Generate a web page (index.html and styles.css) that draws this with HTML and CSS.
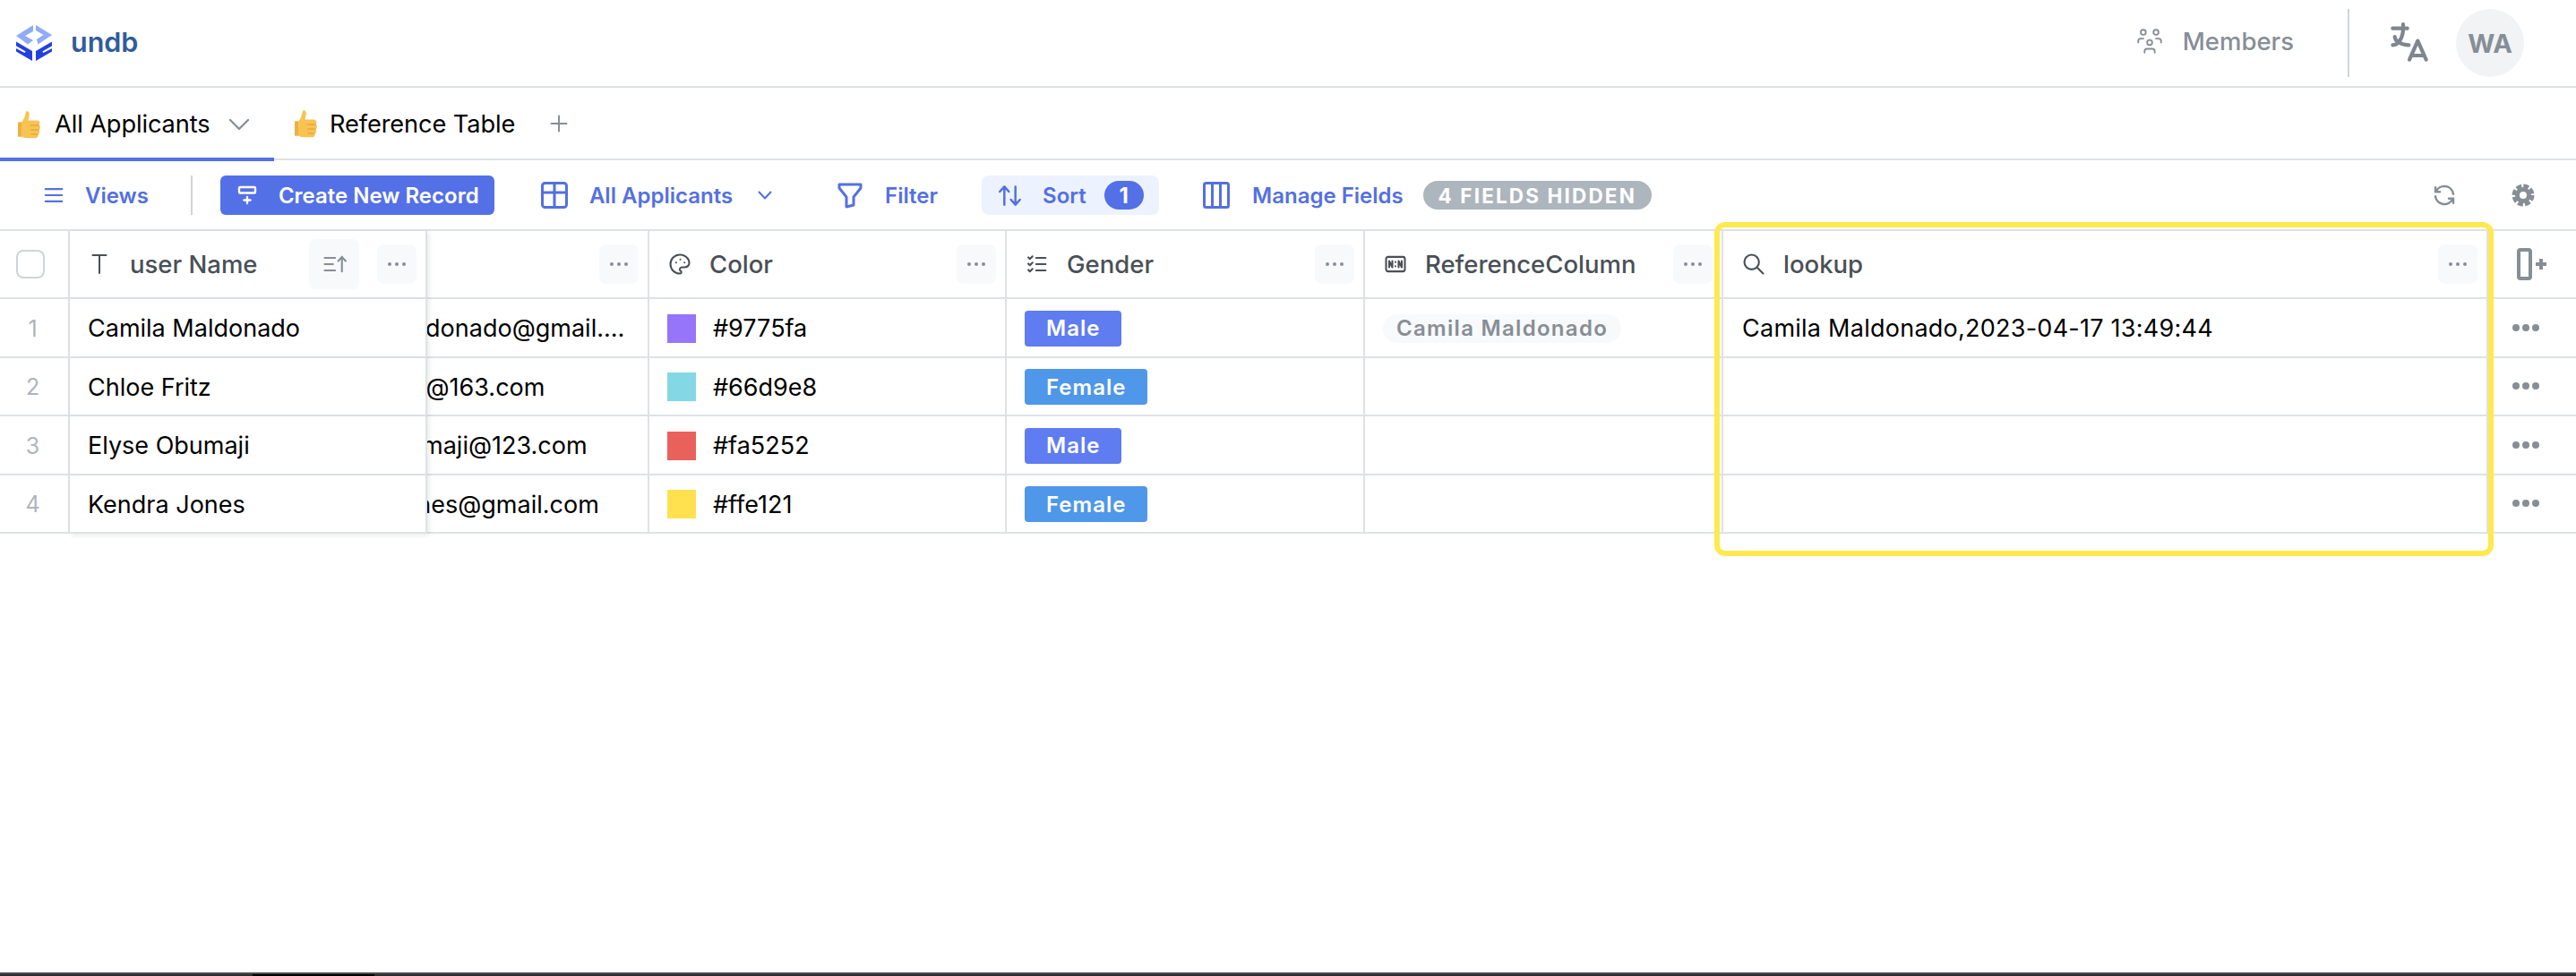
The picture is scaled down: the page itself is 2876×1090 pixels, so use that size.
FILE: index.html
```html
<!DOCTYPE html>
<html lang="en">
<head>
<meta charset="utf-8">
<title>undb</title>
<link rel="stylesheet" href="styles.css">
</head>
<body>
<svg class="defs" width="0" height="0" aria-hidden="true">
  <symbol id="thumb" viewBox="0 0 30 32">
    <path fill="#f7c453" d="M12 1.500c2.400-1 4 .8 3.800 3.200-.2 2.600-1 5-1.200 6.800h9.600c2 0 3.300 1.500 3.300 3.200 0 1-.4 1.700-1 2.300.9.600 1.400 1.500 1.400 2.600 0 1.200-.6 2.100-1.500 2.700.5.600.8 1.300.8 2.100 0 1.200-.7 2.200-1.800 2.700.3.500.4 1 .3 1.500-.2 1.600-1.500 2.600-3.200 2.600H13c-3 0-5-.9-6.500-2.200H3.200V13.500h4c2.200-2.600 4-7 4.800-12z"/>
    <path fill="none" stroke="#dc9a2e" stroke-width="1.200" stroke-linecap="round" d="M17 17h9.400M17.600 22h8.800M18 27h7"/>
    <path fill="#eeb041" d="M3 13.500h4v16.200H3z"/>
  </symbol>
</svg>

<div class="page">
  <header class="topbar">
    <svg class="logo" viewBox="0 0 40 40">
      <path fill="#92aafa" d="M19 0 0 12 13 21.500 19 17 10 12 19 7zM22 0 40 11 24.500 21.500 23 16 30.500 11 22 6z"/>
      <path fill="#2540e0" d="M0 18.500 18 29V40L0 29.500V26L9.500 31.100 10.700 29.500 0 23.300zM40 18.500 22 29V40L40 29.500V26L30.500 31.100 29.300 29.500 40 23.300z"/>
    </svg>
    <span class="brand">undb</span>
    <div class="top-right">
      <svg class="ic members-ic" viewBox="0 0 24 24"><path d="M10 13a2 2 0 1 0 4 0a2 2 0 0 0-4 0M8 21v-1a2 2 0 0 1 2-2h4a2 2 0 0 1 2 2v1M15 5a2 2 0 1 0 4 0a2 2 0 0 0-4 0M17 10h2a2 2 0 0 1 2 2v1M5 5a2 2 0 1 0 4 0a2 2 0 0 0-4 0M3 13v-1a2 2 0 0 1 2-2h2"/></svg>
      <span class="members">Members</span>
      <span class="top-divider"></span>
      <svg class="ic lang-ic" viewBox="0 0 24 24"><path d="M4 5h7M9 3v2c0 4.418-2.239 8-5 8M5 9c0 2.144 2.952 3.908 6.700 4M12 20l4-9 4 9M19.100 18h-6.200"/></svg>
      <span class="avatar">WA</span>
    </div>
  </header>

  <nav class="tabs">
    <div class="tab tab-active">
      <svg class="emoji"><use href="#thumb"/></svg>
      <span class="tab-label">All Applicants</span>
      <svg class="ic tab-chev" viewBox="0 0 24 24"><path d="M6 9l6 6 6-6"/></svg>
    </div>
    <div class="tab tab-second">
      <svg class="emoji"><use href="#thumb"/></svg>
      <span class="tab-label">Reference Table</span>
    </div>
    <svg class="ic tab-plus" viewBox="0 0 20 20"><path d="M10 1.500v17M1.500 10h17"/></svg>
  </nav>

  <div class="toolbar">
    <svg class="ic t-views-ic" viewBox="0 0 24 24"><path d="M2 4.500h20M2 12h20M2 19.500h20"/></svg>
    <span class="t-text t-views">Views</span>
    <span class="t-divider"></span>
    <button class="create">
      <svg class="ic create-ic" viewBox="0 0 24 24"><path d="M21 4v4.500a1 1 0 0 1-1 1H4a1 1 0 0 1-1-1V4a1 1 0 0 1 1-1h16a1 1 0 0 1 1 1zM12 14v7M8.500 17.500h7"/></svg>
      <span>Create New Record</span>
    </button>
    <svg class="ic t-table-ic" viewBox="0 0 30 30"><rect x="1.500" y="1.500" width="27" height="27" rx="3"/><path d="M1.500 12h27M15 1.500v27"/></svg>
    <span class="t-text t-view">All Applicants</span>
    <svg class="ic t-chev" viewBox="0 0 16 16"><path d="M1.500 4.500 8 11.500l6.500-7"/></svg>
    <svg class="ic t-filter-ic" viewBox="0 0 28 28"><path d="M2 2h24v4l-8 10v9l-8 2V16L2 6z"/></svg>
    <span class="t-text t-filter">Filter</span>
    <div class="sort">
      <svg class="ic sort-ic" viewBox="0 0 24 24"><path d="M2 8l4.500-5L11 8M6.500 3v18M22 16l-4.500 5-4.500-5M17.500 21V3"/></svg>
      <span class="t-text sort-label">Sort</span>
      <span class="sort-count">1</span>
    </div>
    <svg class="ic t-cols-ic" viewBox="0 0 30 30"><rect x="1.500" y="1.500" width="27" height="27" rx="2"/><path d="M10.500 1.500v27M19.500 1.500v27"/></svg>
    <span class="t-text t-manage">Manage Fields</span>
    <span class="hidden-pill">4 FIELDS HIDDEN</span>
    <svg class="ic t-sync" viewBox="0 0 24 24"><path d="M20 11A8.100 8.100 0 0 0 4.500 9M4 5v4h4M4 13a8.100 8.100 0 0 0 15.500 2M20 19v-4h-4"/></svg>
    <svg class="t-gear" viewBox="0 0 28 28"><circle cx="14" cy="14" r="9.500" fill="none" stroke="#868e96" stroke-width="6" stroke-dasharray="5.500 1.960"/><circle cx="14" cy="14" r="9" fill="#868e96"/><circle cx="14" cy="14" r="4" fill="#fff"/></svg>
  </div>

  <main class="grid">
    <div class="cell head sel"><span class="checkbox"></span></div>
    <div class="cell head frozen">
      <svg class="ic col-ic t-ic" viewBox="0 0 24 24"><path d="M6 4h12M12 4v16"/></svg>
      <span class="col-label">user Name</span>
      <span class="sort-btn"><svg class="ic" viewBox="0 0 24 24"><path d="M3 6h10M3 12h8M3 18h10M16 9l3.500-4 3.500 4M19.500 5v14"/></svg></span>
      <span class="dots-btn dots-first"><span class="dots"></span></span>
    </div>
    <div class="cell head"><span class="dots-btn"><span class="dots"></span></span></div>
    <div class="cell head">
      <svg class="ic col-ic" viewBox="0 0 24 24"><path d="M12 21a9 9 0 0 1 0-18c4.970 0 9 3.582 9 8 0 1.060-.474 2.078-1.318 2.828-.844.75-1.989 1.172-3.182 1.172H14a2 2 0 0 0-1 3.750A1.300 1.300 0 0 1 12 21M8.500 10.500h.01M12.500 7.500h.01M16.500 10.500h.01"/></svg>
      <span class="col-label">Color</span>
      <span class="dots-btn"><span class="dots"></span></span>
    </div>
    <div class="cell head">
      <svg class="ic col-ic" viewBox="0 0 24 24"><path d="M3.500 5.500 5 7l2.500-2.500M3.500 11.500 5 13l2.500-2.500M3.500 17.500 5 19l2.500-2.500M11 6h9M11 12h9M11 18h9"/></svg>
      <span class="col-label">Gender</span>
      <span class="dots-btn"><span class="dots"></span></span>
    </div>
    <div class="cell head">
      <svg class="ic col-ic" viewBox="0 0 24 24"><path d="M3 7a2 2 0 0 1 2-2h14a2 2 0 0 1 2 2v10a2 2 0 0 1-2 2H5a2 2 0 0 1-2-2zM15 15V9l3 6V9M6 15V9l3 6V9M12 10v.01M12 14v.01"/></svg>
      <span class="col-label">ReferenceColumn</span>
      <span class="dots-btn"><span class="dots"></span></span>
    </div>
    <div class="cell head">
      <svg class="ic col-ic" viewBox="0 0 24 24"><path d="M3 10a7 7 0 1 0 14 0a7 7 0 1 0-14 0M21 21l-6-6"/></svg>
      <span class="col-label">lookup</span>
      <span class="dots-btn"><span class="dots"></span></span>
    </div>
    <div class="cell head add-col">
      <svg class="add-ic" viewBox="0 0 34 36"><rect x="2" y="2" width="13" height="32" rx="2" fill="none" stroke="#868e96" stroke-width="4"/><path d="M27 12v12M21 18h12" stroke="#868e96" stroke-width="4" fill="none"/></svg>
    </div>

    <div class="cell body num">1</div>
    <div class="cell body frozen name">Camila Maldonado</div>
    <div class="cell body email"><span class="email-text">camilamaldonado@gmail.com</span></div>
    <div class="cell body"><span class="swatch swatch-1"></span><span class="swatch-text">#9775fa</span></div>
    <div class="cell body"><span class="badge male">Male</span></div>
    <div class="cell body"><span class="pill">Camila Maldonado</span></div>
    <div class="cell body text">Camila Maldonado,2023-04-17 13:49:44</div>
    <div class="cell act"><span class="row-dots"></span></div>

    <div class="cell body num">2</div>
    <div class="cell body frozen name">Chloe Fritz</div>
    <div class="cell body email"><span class="email-text">chloe.fritz@163.com</span></div>
    <div class="cell body"><span class="swatch swatch-2"></span><span class="swatch-text">#66d9e8</span></div>
    <div class="cell body"><span class="badge female">Female</span></div>
    <div class="cell body"></div>
    <div class="cell body"></div>
    <div class="cell act"><span class="row-dots"></span></div>

    <div class="cell body num">3</div>
    <div class="cell body frozen name">Elyse Obumaji</div>
    <div class="cell body email"><span class="email-text">elyse.obumaji@123.com</span></div>
    <div class="cell body"><span class="swatch swatch-3"></span><span class="swatch-text">#fa5252</span></div>
    <div class="cell body"><span class="badge male">Male</span></div>
    <div class="cell body"></div>
    <div class="cell body"></div>
    <div class="cell act"><span class="row-dots"></span></div>

    <div class="cell body num">4</div>
    <div class="cell body frozen name">Kendra Jones</div>
    <div class="cell body email"><span class="email-text">kendra.jones@gmail.com</span></div>
    <div class="cell body"><span class="swatch swatch-4"></span><span class="swatch-text">#ffe121</span></div>
    <div class="cell body"><span class="badge female">Female</span></div>
    <div class="cell body"></div>
    <div class="cell body"></div>
    <div class="cell act"><span class="row-dots"></span></div>
  </main>

  <div class="spacer"></div>
  <footer class="strip"><span class="strip-left"></span><span class="strip-dark"></span><span class="strip-right"></span></footer>
</div>
<div class="highlight"></div>
</body>
</html>
```
FILE: styles.css
```css
* { box-sizing: border-box; }
html, body { margin: 0; height: 100%; }
body { font-family: Inter, "Liberation Sans", sans-serif; color: #000; background: #fff; overflow: hidden; position: relative; }
.defs { position: absolute; }
.page { display: flex; flex-direction: column; height: 1090px; }
.ic { fill: none; stroke: currentColor; stroke-width: 2; stroke-linecap: round; stroke-linejoin: round; flex: none; }

/* top bar */
.topbar { height: 98px; flex: none; display: flex; align-items: center; padding-left: 18px; border-bottom: 2px solid #dee2e6; }
.logo { width: 40px; height: 40px; flex: none; }
.brand { margin-left: 21px; font-size: 30.500px; font-weight: 600; color: #2f5c9e; margin-top: -4px; }
.top-right { margin-left: auto; display: flex; align-items: center; padding-right: 58px; color: #868e96; }
.members-ic { width: 34px; height: 34px; stroke-width: 1.300; margin-top: -5px; }
.members { margin-left: 20px; font-size: 27.500px; font-weight: 500; margin-top: -4px; }
.top-divider { width: 2px; height: 76px; background: #ced4da; margin-left: 60px; }
.lang-ic { width: 56px; height: 56px; margin-left: 39px; stroke-width: 1.800; color: #7f868d; }
.avatar { width: 76px; height: 76px; border-radius: 50%; margin-left: 24px; background: #f1f3f5; display: flex; align-items: center; justify-content: center; font-size: 29px; font-weight: 700; color: #868e96; }

/* tabs */
.tabs { height: 81px; flex: none; display: flex; align-items: center; border-bottom: 2px solid #dee2e6; }
.tab { display: flex; align-items: center; height: 79px; flex: none; padding-left: 17px; padding-top: 1px; }
.tab-active { width: 306px; border-bottom: 4px solid #5470e6; padding-top: 3px; height: 82px; margin-top: 1px; margin-bottom: -2px; }
.tab-second { padding-left: 20px; }
.tab-second .tab-label { margin-left: 12px; }
.emoji { width: 30px; height: 32px; flex: none; }
.tab-label { margin-left: 14px; font-size: 27.200px; font-weight: 400; letter-spacing: -.1px; color: #000; }
.tab-chev { width: 40px; height: 40px; margin-left: 12px; stroke-width: 1.400; color: #868e96; }
.tab-plus { width: 20px; height: 20px; margin-left: 39px; color: #868e96; }

/* toolbar */
.toolbar { height: 79px; flex: none; display: flex; align-items: center; padding: 1px 45px 0 49px; border-bottom: 2px solid #dee2e6; color: #5470e0; }
.t-text { font-size: 24px; font-weight: 600; flex: none; }
.t-views-ic { width: 22px; height: 22px; stroke-width: 2.400; }
.t-views { margin-left: 24px; }
.t-divider { width: 2px; height: 44px; background: #ced4da; margin-left: 47px; flex: none; }
.create { margin-left: 31px; height: 44px; width: 306px; flex: none; border: 0; border-radius: 6px; background: #5470e6; color: #fff; display: flex; align-items: center; padding: 0 0 0 18px; font: 600 24px Inter, sans-serif; }
.create-ic { width: 24px; height: 24px; margin-right: 23px; stroke-width: 2.400; }
.t-table-ic { width: 30px; height: 30px; margin-left: 52px; stroke-width: 3; }
.t-view { margin-left: 24px; }
.t-chev { width: 16px; height: 16px; margin-left: 28px; stroke-width: 2; }
.t-filter-ic { width: 28px; height: 30px; margin-left: 73px; stroke-width: 3; }
.t-filter { margin-left: 25px; }
.sort { margin-left: 49px; width: 198px; height: 44px; flex: none; background: #edf2ff; border-radius: 8px; display: flex; align-items: center; padding-left: 18px; }
.sort-ic { width: 27px; height: 27px; stroke-width: 2.200; }
.sort-label { margin-left: 23px; }
.sort-count { margin-left: 20px; width: 44px; height: 32px; border-radius: 16px; background: #5470e6; color: #fff; font-size: 24px; font-weight: 700; display: flex; align-items: center; justify-content: center; flex: none; }
.t-cols-ic { width: 30px; height: 30px; margin-left: 49px; stroke-width: 3; }
.t-manage { margin-left: 25px; }
.hidden-pill { margin-left: 22px; height: 32px; width: 255px; flex: none; border-radius: 16px; background: #adb5bd; color: #fff; font-size: 22.500px; font-weight: 700; letter-spacing: 2.150px; display: flex; align-items: center; justify-content: center; }
.t-sync { width: 30px; height: 30px; margin-left: auto; color: #868e96; }
.t-gear { width: 28px; height: 28px; margin-left: 59px; flex: none; }

/* grid */
.grid { flex: none; display: grid; grid-template-columns: 78px 399px 248px 399px 400px 400px 854px 98px; grid-template-rows: 76px repeat(4, 65.500px); }
.cell { display: flex; align-items: center; padding-left: 20px; border-right: 2px solid #dee2e6; border-bottom: 2px solid #dee2e6; font-size: 27px; min-width: 0; }
.body { padding-top: 2px; }
.head { padding-right: 10px; color: #495057; }
.col-ic { width: 28px; height: 28px; stroke-width: 1.800; }
.col-label { margin-left: 19px; font-size: 27.500px; font-weight: 500; color: #495057; }
.sel { padding-left: 18px; }
.checkbox { width: 32px; height: 32px; border: 2px solid #ced4da; border-radius: 8px; background: #fff; flex: none; }
.frozen { position: relative; z-index: 1; background: #fff; box-shadow: 2px 2px 5px rgba(73, 80, 87, .12); }
.head.frozen { padding-left: 18px; }
.t-ic { width: 30px; height: 30px; stroke-width: 1.600; }
.sort-btn { margin-left: auto; width: 56px; height: 56px; border-radius: 8px; background: #f8f9fa; display: flex; align-items: center; justify-content: center; flex: none; color: #868e96; }
.sort-btn svg { width: 28px; height: 28px; stroke-width: 1.800; }
.dots-btn { margin-left: auto; width: 44px; height: 44px; border-radius: 8px; background: #f8f9fa; display: flex; align-items: center; justify-content: center; flex: none; }
.dots-first { margin-left: 20px; }
.dots { display: block; width: 4px; height: 4px; border-radius: 50%; background: #868e96; box-shadow: -8px 0 #868e96, 8px 0 #868e96; }
.add-col { border-right: 0; padding-left: 32px; }
.add-ic { width: 34px; height: 36px; }
.num { padding: 2px 3px 0 0; justify-content: center; color: #adb5bd; font-size: 25px; }
.name { padding-left: 20px; }
.email { overflow: hidden; padding-left: 0; }
.email-text { flex: none; margin-left: -130px; width: 358px; overflow: hidden; white-space: nowrap; text-overflow: ellipsis; }
.swatch { width: 32px; height: 32px; flex: none; }
.swatch-1 { background: #9775fa; }
.swatch-2 { background: #84d7e4; }
.swatch-3 { background: #e9615b; }
.swatch-4 { background: #ffe14f; }
.swatch-text { margin-left: 19px; }
.badge { height: 40px; border-radius: 4px; color: #fff; font-size: 24px; font-weight: 600; letter-spacing: 1px; display: flex; align-items: center; padding: 0 24px; }
.male { background: #5f7cf0; }
.female { background: #4f97e8; }
.pill { height: 32px; border-radius: 16px; background: #f8f9fa; color: #868e96; font-size: 24px; font-weight: 600; letter-spacing: 1.300px; display: flex; align-items: center; padding: 0 15px; }
.text { padding-left: 21px; white-space: nowrap; letter-spacing: .25px; }
.act { border-right: 0; padding-left: 27px; }
.row-dots { display: block; width: 8px; height: 8px; margin-left: 11px; border-radius: 50%; background: #868e96; box-shadow: -11px 0 #868e96, 11px 0 #868e96; }

/* bottom */
.spacer { flex: 1; }
.strip { height: 4px; flex: none; display: flex; border-top: 2px solid #4a4a4c; background: #2e2e30; }
.strip-left { width: 282px; }
.strip-dark { width: 136px; background: #000; }
.strip-right { flex: 1; }

/* annotation */
.highlight { position: absolute; left: 1914px; top: 248px; width: 870px; height: 373px; border: 6px solid #ffe94f; border-radius: 12px; z-index: 2; pointer-events: none; }
```
